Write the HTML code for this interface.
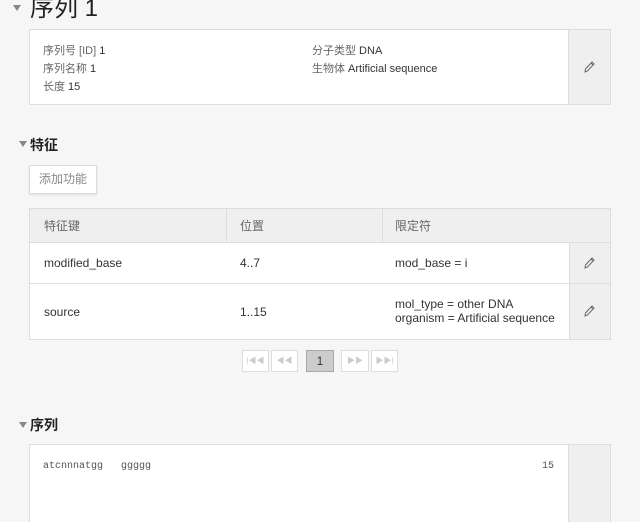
<!DOCTYPE html>
<html><head><meta charset="utf-8"><style>
html,body{margin:0;width:640px;height:522px;overflow:hidden}
body{background:#f6f6f6;font-family:"Liberation Sans","Noto Sans CJK SC",sans-serif;color:#333;position:relative}
.a{position:absolute}
.tri{width:0;height:0;border-left:4px solid transparent;border-right:4px solid transparent;border-top:6px solid #888}
.box{background:#fff;border:1px solid #ddd;box-sizing:border-box}
.ed{background:#efefef;border-left:1px solid #ddd;box-sizing:border-box}
.s{font-size:11px;white-space:nowrap}
.g{color:#666}
.h{font-size:14px;font-weight:bold;color:#222}
.pb{background:#fff;border:1px solid #ddd;box-sizing:border-box;height:22px;color:#ccc;font-size:8px;text-align:center;line-height:20px}
</style></head><body>
<div class="a tri" style="left:13px;top:5px"></div>
<div class="a" style="left:30px;top:-12px;font-size:24px;color:#222">序列 1</div>

<div class="a box" style="left:29px;top:29px;width:582px;height:76px"></div>
<div class="a ed" style="left:568px;top:30px;width:42px;height:74px"></div>
<svg class="a" style="left:583px;top:60px" width="12" height="14" viewBox="0 0 12 14"><path d="M2 12 L2.5 9 L9 2 L11 4 L4.5 11 Z M8 3 L10 5" fill="none" stroke="#666" stroke-width="1"/></svg>
<div class="a s" style="left:43px;top:42px"><span class="g">序列号 [ID]</span> 1</div>
<div class="a s" style="left:43px;top:60px"><span class="g">序列名称</span> 1</div>
<div class="a s" style="left:43px;top:78px"><span class="g">长度</span> 15</div>
<div class="a s" style="left:312px;top:42px"><span class="g">分子类型</span> DNA</div>
<div class="a s" style="left:312px;top:60px"><span class="g">生物体</span> Artificial sequence</div>

<div class="a tri" style="left:19px;top:141px"></div>
<div class="a h" style="left:30px;top:135px">特征</div>
<div class="a box" style="left:29px;top:165px;width:68px;height:29px;font-size:12px;color:#888;text-align:center;line-height:27px;box-shadow:0 1px 2px rgba(0,0,0,.1)">添加功能</div>

<div class="a box" style="left:29px;top:208px;width:582px;height:132px"></div>
<div class="a" style="left:30px;top:209px;width:580px;height:33px;background:#efefef;border-bottom:1px solid #ddd"></div>
<div class="a" style="left:226px;top:209px;width:1px;height:33px;background:#ddd"></div>
<div class="a" style="left:382px;top:209px;width:1px;height:33px;background:#ddd"></div>
<div class="a" style="left:30px;top:283px;width:580px;height:1px;background:#ddd"></div>
<div class="a ed" style="left:569px;top:243px;width:41px;height:96px"></div>
<div class="a" style="left:569px;top:283px;width:41px;height:1px;background:#ddd"></div>
<div class="a s g" style="left:44px;top:217px;font-size:12px">特征键</div>
<div class="a s g" style="left:240px;top:217px;font-size:12px">位置</div>
<div class="a s g" style="left:395px;top:217px;font-size:12px">限定符</div>
<div class="a s" style="left:44px;top:256px;font-size:12px">modified_base</div>
<div class="a s" style="left:240px;top:256px;font-size:12px">4..7</div>
<div class="a s" style="left:395px;top:256px;font-size:12px">mod_base = i</div>
<div class="a s" style="left:44px;top:305px;font-size:12px">source</div>
<div class="a s" style="left:240px;top:305px;font-size:12px">1..15</div>
<div class="a s" style="left:395px;top:297px;font-size:12px;line-height:14px">mol_type = other DNA<br>organism = Artificial sequence</div>
<svg class="a" style="left:583px;top:256px" width="12" height="14" viewBox="0 0 12 14"><path d="M2 12 L2.5 9 L9 2 L11 4 L4.5 11 Z M8 3 L10 5" fill="none" stroke="#666" stroke-width="1"/></svg>
<svg class="a" style="left:583px;top:304px" width="12" height="14" viewBox="0 0 12 14"><path d="M2 12 L2.5 9 L9 2 L11 4 L4.5 11 Z M8 3 L10 5" fill="none" stroke="#666" stroke-width="1"/></svg>

<div class="a pb" style="left:242px;top:350px;width:27px">|◀◀</div>
<div class="a pb" style="left:271px;top:350px;width:27px">◀◀</div>
<div class="a pb" style="left:306px;top:350px;width:28px;background:#ccc;border-color:#aaa;color:#333;font-size:12px">1</div>
<div class="a pb" style="left:341px;top:350px;width:28px">▶▶</div>
<div class="a pb" style="left:371px;top:350px;width:27px">▶▶|</div>

<div class="a tri" style="left:19px;top:422px"></div>
<div class="a h" style="left:30px;top:415px">序列</div>
<div class="a box" style="left:29px;top:444px;width:582px;height:90px"></div>
<div class="a ed" style="left:568px;top:445px;width:42px;height:88px"></div>
<div class="a" style="left:43px;top:461px;font-family:'Liberation Mono',monospace;font-size:10px;color:#555;white-space:pre">atcnnnatgg   ggggg</div>
<div class="a" style="left:542px;top:461px;font-family:'Liberation Mono',monospace;font-size:10px;color:#555">15</div>
</body></html>
